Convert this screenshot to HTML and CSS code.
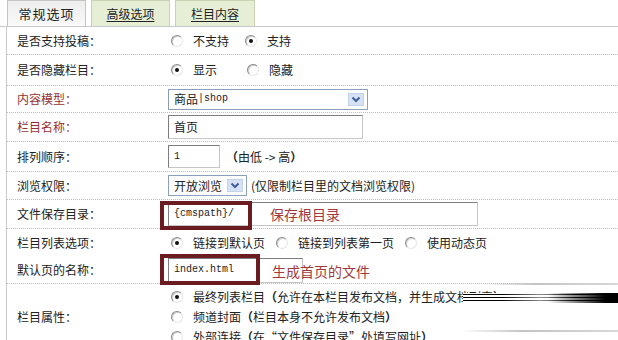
FILE: index.html
```html
<!DOCTYPE html>
<html lang="zh-CN">
<head>
<meta charset="utf-8">
<title>栏目设置</title>
<link rel="stylesheet" href="styles.css">
</head>
<body>
<div class="tabs">
  <div class="tab tab-active">常规选项</div>
  <div class="tab"><u>高级选项</u></div>
  <div class="tab"><u>栏目内容</u></div>
</div>
<div class="form">
  <div class="row h28">
    <div class="label">是否支持投稿：</div>
    <div class="value">
      <span class="opt w72"><span class="radio"></span>不支持</span>
      <span class="opt"><span class="radio checked"></span>支持</span>
    </div>
  </div>
  <div class="row h31">
    <div class="label">是否隐藏栏目：</div>
    <div class="value">
      <span class="opt w73"><span class="radio checked"></span>显示</span>
      <span class="opt"><span class="radio"></span>隐藏</span>
    </div>
  </div>
  <div class="row h27">
    <div class="label red">内容模型：</div>
    <div class="value">
      <div class="select sel-model"><span class="cjk">商品</span><span class="mono">|shop</span>
        <span class="arrow"><svg width="10" height="7" viewBox="0 0 10 7"><polyline points="1.5,1.5 5,5 8.5,1.5" fill="none" stroke="#3f5f9a" stroke-width="2"/></svg></span>
      </div>
    </div>
  </div>
  <div class="row h29">
    <div class="label red">栏目名称：</div>
    <div class="value"><div class="field f-name">首页</div></div>
  </div>
  <div class="row h30">
    <div class="label">排列顺序：</div>
    <div class="value"><div class="field f-order"><span class="mono">1</span></div><span class="hint"><b class="br">（</b>由低 -&gt; 高<b class="br">）</b></span></div>
  </div>
  <div class="row h28">
    <div class="label">浏览权限：</div>
    <div class="value">
      <div class="select sel-perm">开放浏览
        <span class="arrow"><svg width="10" height="7" viewBox="0 0 10 7"><polyline points="1.5,1.5 5,5 8.5,1.5" fill="none" stroke="#3f5f9a" stroke-width="2"/></svg></span>
      </div>
      <span class="hint2">(仅限制栏目里的文档浏览权限)</span>
    </div>
  </div>
  <div class="row h29">
    <div class="label">文件保存目录：</div>
    <div class="value">
      <div class="field f-path"><span class="mono">{cmspath}/</span>
        <span class="note note-path">保存根目录</span>
        <span class="box box-path"></span>
      </div>
    </div>
  </div>
  <div class="row h28 nob">
    <div class="label">栏目列表选项：</div>
    <div class="value">
      <span class="opt gap"><span class="radio checked"></span>链接到默认页</span>
      <span class="opt gap"><span class="radio"></span>链接到列表第一页</span>
      <span class="opt"><span class="radio"></span>使用动态页</span>
    </div>
  </div>
  <div class="row h27">
    <div class="label">默认页的名称：</div>
    <div class="value">
      <div class="field f-index"><span class="mono">index.html</span>
        <span class="note note-index">生成首页的文件</span>
        <span class="box box-index"></span>
      </div>
    </div>
  </div>
  <div class="row h66 nob">
    <div class="label">栏目属性：</div>
    <div class="value col">
      <span class="opt line"><span class="radio checked"></span>最终列表栏目<b class="br">（</b>允许在本栏目发布文档，并生成文档列表<b class="br">）</b></span>
      <span class="opt line"><span class="radio"></span>频道封面<b class="br">（</b>栏目本身不允许发布文档<b class="br">）</b></span>
      <span class="opt line"><span class="radio"></span>外部连接<b class="br">（</b>在“文件保存目录”处填写网址<b class="br">）</b></span>
    </div>
  </div>
</div>
<div class="streak"></div>
<div class="fade fade-a"></div>
<div class="fade fade-b"></div>
</body>
</html>
```

FILE: styles.css
```css
* { box-sizing: border-box; }
html, body { margin: 0; padding: 0; }
body {
  position: relative;
  width: 618px;
  height: 340px;
  overflow: hidden;
  background: #fff;
  color: #222;
  font: 12px/16px "Noto Sans CJK SC", "Noto Sans", sans-serif;
}

.tabs {
  display: flex;
  align-items: flex-end;
  gap: 5px;
  height: 27px;
  padding-left: 7px;
  border-bottom: 1px solid #c8c8c8;
}
.tab {
  width: 79px;
  height: 26px;
  display: flex;
  align-items: center;
  justify-content: center;
  border: 1px solid #c9d3b4;
  border-bottom: none;
  background: #e6efd5;
  color: #222;
}
.tab:last-child { width: 80px; }
.tab u { text-decoration: underline; text-underline-offset: 2px; }
.tab-active {
  background: linear-gradient(#ededed, #fafafa);
  border-color: #c4c4c4;
  font-size: 13px;
  letter-spacing: 1px;
}

.form {
  margin-left: 6px;
  border-left: 1px solid #c8c8c8;
}
.row {
  display: flex;
  align-items: center;
  border-bottom: 1px dotted #bcbcbc;
}
.nob { border-bottom: none; }
.h27 { height: 27px; }
.h28 { height: 28px; }
.h29 { height: 29px; }
.h30 { height: 30px; }
.h31 { height: 31px; }
.h66 { height: 66px; }

.label {
  flex: none;
  width: 161px;
  padding-left: 10px;
}
.red { color: #963234; }
.value {
  display: flex;
  align-items: center;
}
.col {
  flex-direction: column;
  align-items: flex-start;
}

.opt {
  display: inline-flex;
  align-items: center;
  padding-left: 3px;
}
.w72 { min-width: 74px; }
.w73 { min-width: 76px; }
.gap { margin-right: 8px; }
.line { height: 20px; }
.br { font-weight: 700; }

.radio {
  position: relative;
  flex: none;
  width: 12px;
  height: 12px;
  margin-right: 10px;
  border-radius: 50%;
  border: 1px solid;
  border-color: #8a8a8a #e6e6e6 #e6e6e6 #8a8a8a;
  background: #fff;
  box-shadow: inset 1px 1px 0 #d0d0d0;
}
.radio.checked::after {
  content: "";
  position: absolute;
  left: 3px;
  top: 3px;
  width: 4px;
  height: 4px;
  border-radius: 50%;
  background: #111;
}

.field, .select {
  position: relative;
  display: flex;
  align-items: center;
  padding-left: 5px;
  background: #fff;
}
.field {
  border: 1px solid;
  border-color: #7e7e7e #c6c6c6 #c6c6c6 #7e7e7e;
}
.select {
  border: 1px solid #8a9fb8;
}
.mono {
  font-family: "Liberation Mono", monospace;
  font-size: 10px;
}
.sel-model { width: 200px; height: 21px; }
.sel-perm { width: 79px; height: 21px; }
.arrow {
  position: absolute;
  right: 3px;
  top: 3px;
  width: 16px;
  height: 13px;
  display: flex;
  align-items: center;
  justify-content: center;
  background: #d6e1f5;
  border: 1px solid #c3d1ea;
}
.f-name { width: 195px; height: 24px; }
.f-order { width: 52px; height: 23px; }
.f-path { width: 310px; height: 24px; }
.f-index { width: 135px; height: 25px; }
.hint { margin-left: 6px; }
.hint2 { margin-left: 4px; }

.note {
  position: absolute;
  white-space: nowrap;
  color: #a23a3d;
  font-size: 14px;
  line-height: 16px;
}
.note-path { left: 101px; top: 3px; }
.note-index { left: 103px; top: 4px; }

.box {
  position: absolute;
  border: 4px solid #6b1c20;
}
.box-path { left: -9px; top: -2px; width: 92px; height: 29px; }
.box-index { left: -9px; top: -5px; width: 100px; height: 31px; }

.streak {
  position: absolute;
  left: 463px;
  top: 293px;
  width: 155px;
  height: 10px;
  background:
    linear-gradient(to right, rgba(0,0,0,0) 55%, #000 92%),
    linear-gradient(to right, rgba(255,255,255,0) 25%, rgba(255,255,255,0.55) 50%, rgba(255,255,255,0) 75%),
    repeating-linear-gradient(to bottom, #fff 0 1px, #000 1px 2px, #fff 2px 3px);
}
.fade {
  position: absolute;
  height: 2px;
  background: linear-gradient(to right, rgba(190,190,190,0), #c4c4c4 40%, #d8d8d8);
}
.fade-a { left: 480px; top: 283px; width: 138px; }
.fade-b { left: 460px; top: 330px; width: 158px; }
```
